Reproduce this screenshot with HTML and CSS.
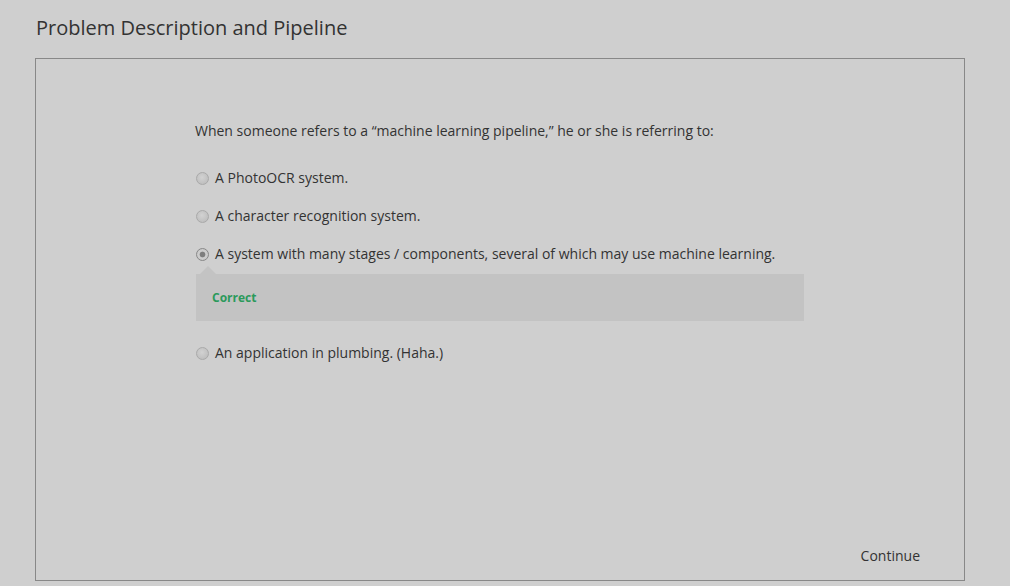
FILE: index.html
```html
<!DOCTYPE html>
<html>
<head>
<meta charset="utf-8">
<link rel="stylesheet" href="styles.css">
</head>
<body>
<h1 class="title">Problem Description and Pipeline</h1>
<div class="panel">
  <div class="quiz">
    <p class="question">When someone refers to a “machine learning pipeline,” he or she is referring to:</p>
    <div class="option"><span class="radio"></span><span>A PhotoOCR system.</span></div>
    <div class="option"><span class="radio"></span><span>A character recognition system.</span></div>
    <div class="option"><span class="radio checked"></span><span>A system with many stages / components, several of which may use machine learning.</span></div>
    <div class="feedback">Correct</div>
    <div class="option last"><span class="radio"></span><span>An application in plumbing. (Haha.)</span></div>
  </div>
  <div class="footer"><span class="continue">Continue</span></div>
</div>
</body>
</html>
```
FILE: styles.css
```css
html, body {
  margin: 0;
  padding: 0;
  background: #cfcfcf;
  font-family: "Open Sans", "Liberation Sans", sans-serif;
  color: #333;
}
.title {
  margin: 0;
  padding: 15px 0 0 36px;
  height: 58px;
  box-sizing: border-box;
  font-size: 20px;
  font-weight: 400;
  line-height: 26px;
  color: #333;
}
.panel {
  margin-left: 35px;
  width: 930px;
  height: 523px;
  box-sizing: border-box;
  border: 1px solid #888;
  display: flex;
  flex-direction: column;
}
.quiz {
  padding: 62px 0 0 160px;
  width: 608px;
}
.question {
  margin: 0 0 0 -1px;
  font-size: 14px;
  line-height: 20px;
}
.option {
  display: flex;
  align-items: center;
  gap: 6px;
  margin-top: 18px;
  font-size: 14px;
  line-height: 20px;
}
.question + .option { margin-top: 27px; }
.radio {
  width: 11px;
  height: 11px;
  border-radius: 50%;
  border: 1px solid #a9a9a9;
  background: radial-gradient(circle at 45% 40%, #d2d2d2 0%, #c0c0c0 70%, #b4b4b4 100%);
  flex: none;
  position: relative;
}
.radio.checked {
  border-color: #888;
  background: radial-gradient(circle at 50% 50%, #7e7e7e 0%, #7e7e7e 32%, #cfcfcf 42%, #c2c2c2 100%);
}
.feedback {
  position: relative;
  margin-top: 10px;
  height: 47px;
  background: #c3c3c3;
  color: #2b9a5b;
  font-size: 12px;
  font-weight: 700;
  line-height: 47px;
  padding-left: 16px;
}
.feedback::before {
  content: "";
  position: absolute;
  left: 4px;
  top: -8px;
  border-left: 8px solid transparent;
  border-right: 8px solid transparent;
  border-bottom: 8px solid #c3c3c3;
}
.option.last { margin-top: 22px; }
.footer {
  margin-top: auto;
  display: flex;
  justify-content: flex-end;
  padding: 0 44px 14px 0;
}
.continue {
  font-size: 14px;
  line-height: 20px;
  color: #333;
}
```
